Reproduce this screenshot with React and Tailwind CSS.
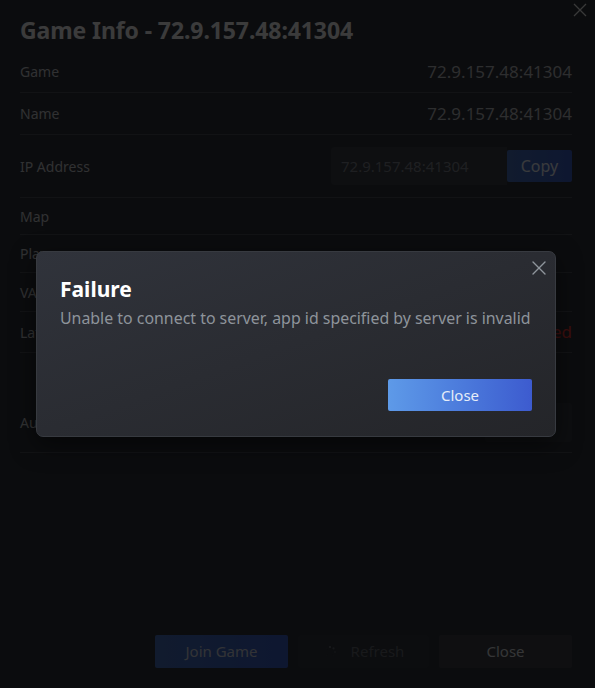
import React from 'react'
import { X } from 'lucide-react'

const ROWS = [
  { label: 'Game', value: '72.9.157.48:41304', h: 'h-[42px]' },
  { label: 'Name', value: '72.9.157.48:41304', h: 'h-[42px]' },
]

const PLAIN = [
  { label: 'Map', h: 'h-[37px]' },
  { label: 'Players', h: 'h-[38px]' },
  { label: 'VAC', h: 'h-[39px]' },
]

function Spinner() {
  const dots = Array.from({ length: 8 })
  return (
    <svg width="14" height="14" viewBox="0 0 14 14" className="shrink-0">
      {dots.map((_, i) => {
        const a = (i / 8) * Math.PI * 2 - Math.PI / 2
        return (
          <circle
            key={i}
            cx={7 + Math.cos(a) * 5}
            cy={7 + Math.sin(a) * 5}
            r="1.1"
            fill="#6a6e76"
            opacity={i < 3 ? 1 - i * 0.3 : 0.08}
          />
        )
      })}
    </svg>
  )
}

export default function App() {
  return (
    <div className="relative w-[595px] h-[688px] overflow-hidden bg-[#2c3038] font-['Noto_Sans',sans-serif]">
      {/* Game info dialog (underneath) */}
      <div className="flex flex-col h-full pl-5 pr-[23px]">
        <h1 className="pt-4 text-[23px] leading-[28px] font-bold text-[#eaeaec] tracking-[-0.1px]">
          Game Info - 72.9.157.48:41304
        </h1>

        <div className="mt-[7px]">
          {ROWS.map((r) => (
            <div key={r.label} className={`${r.h} flex items-center justify-between border-b border-[#484c54]`}>
              <span className="text-[14px] text-[#c0c2c6]">{r.label}</span>
              <span className="text-[17px] text-[#b4b6ba]">{r.value}</span>
            </div>
          ))}

          <div className="h-[63px] flex items-center justify-between border-b border-[#484c54]">
            <span className="text-[14px] text-[#c0c2c6]">IP Address</span>
            <div className="flex items-center">
              <div className="w-[176px] h-[38px] flex items-center px-[10px] bg-[#383c44] rounded-l-[3px] text-[15px] text-[#7a7e86]">
                72.9.157.48:41304
              </div>
              <button className="w-[65px] h-[32px] rounded-[2px] bg-linear-to-r from-[#446cb8] to-[#3a5cc0] text-[16px] text-[#e2e6f0]">
                Copy
              </button>
            </div>
          </div>

          {PLAIN.map((r) => (
            <div key={r.label} className={`${r.h} flex items-center border-b border-[#484c54]`}>
              <span className="text-[14px] text-[#c0c2c6]">{r.label}</span>
            </div>
          ))}

          <div className="h-[41px] flex items-center justify-between border-b border-[#484c54]">
            <span className="text-[14px] text-[#c0c2c6]">Latency</span>
            <span className="text-[17px] text-[#ec3a36]">Failed</span>
          </div>

          <div className="h-[100px] flex items-end justify-between pb-[10px] border-b border-[#484c54]">
            <span className="h-[39px] flex items-center text-[14px] text-[#c0c2c6]">Auto-refresh</span>
            <div className="w-[87px] h-[39px] rounded-[3px] bg-[#363a42]" />
          </div>
        </div>

        <div className="mt-auto pb-5 flex justify-end gap-[10px]">
          <button className="w-[133px] h-[33px] rounded-[2px] bg-linear-to-r from-[#446cb8] to-[#3a5cc0] text-[15px] text-[#c8ccd6]">
            Join Game
          </button>
          <button className="w-[131px] h-[33px] rounded-[2px] bg-[#30343c] flex items-center justify-center gap-[14px] text-[15px] text-[#60646c]">
            <Spinner />
            Refresh
          </button>
          <button className="w-[133px] h-[33px] rounded-[2px] bg-[#3c3f46] text-[15px] text-[#d2d4d8]">
            Close
          </button>
        </div>
      </div>

      <button className="absolute right-[8px] top-[3px] text-[#e4e4e4]">
        <svg width="14" height="14" viewBox="0 0 14 14" fill="none" stroke="currentColor" strokeWidth="1.3">
          <path d="M1 1 13 13M13 1 1 13" />
        </svg>
      </button>

      {/* Dim overlay + failure modal */}
      <div className="absolute inset-0 bg-black/75 flex items-center justify-center pr-[3px]">
        <div className="relative w-[520px] h-[186px] rounded-[7px] border border-[#373a40] bg-linear-to-br from-[#30333b] to-[#242529] shadow-[0_8px_24px_rgba(0,0,0,0.5)] flex flex-col pl-[23px] pr-[15px] pt-[24px]">
          <button className="absolute right-1 top-1 text-[#8f959c]">
            <X size={24} strokeWidth={1.4} />
          </button>
          <h2 className="text-[21px] leading-[26px] font-bold text-white">Failure</h2>
          <p className="mt-[5px] text-[15.9px] leading-[22px] text-[#8e949b] whitespace-nowrap">
            Unable to connect to server, app id specified by server is invalid
          </p>
          <div className="mt-auto pb-[25px] pr-[8px] flex justify-end">
            <button className="w-[144px] h-[32px] rounded-[2px] bg-linear-to-r from-[#5e9ae8] to-[#3d5bcf] text-[15px] text-[#e6edf8]">
              Close
            </button>
          </div>
        </div>
      </div>
    </div>
  )
}
